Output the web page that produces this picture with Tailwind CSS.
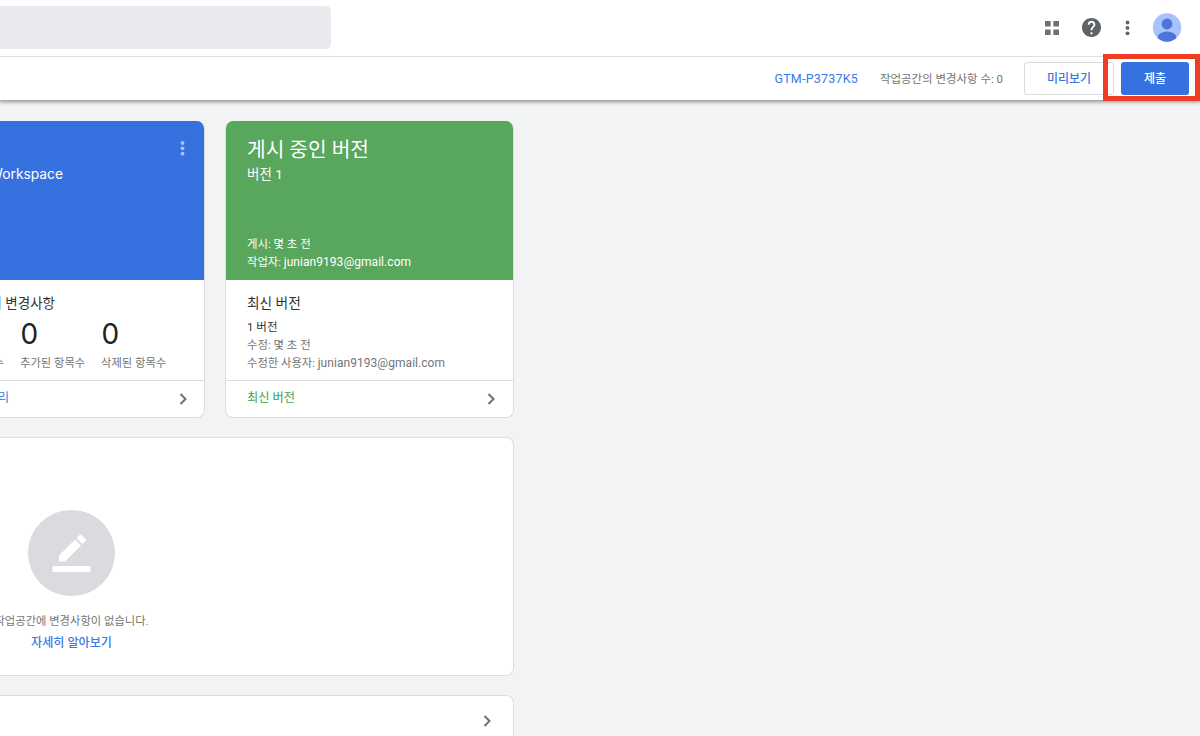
<!DOCTYPE html>
<html lang="ko">
<head>
<meta charset="utf-8">
<title>Tag Manager</title>
<script src="https://cdn.jsdelivr.net/npm/@tailwindcss/browser@4"></script>
</head>
<body class="w-[1200px] h-[736px] overflow-hidden bg-[#f1f3f5] font-['Roboto','Noto_Sans_CJK_KR',sans-serif] text-[11.3px] whitespace-nowrap text-[#757575]">
<header class="relative z-10 h-[100px] bg-white shadow-[0_1px_4px_1px_rgba(0,0,0,0.4)]">
  <div class="flex h-[57px] items-start justify-between border-b border-[#dfe0e2]">
    <div class="mt-[6px] h-[43px] w-[331px] rounded-r-[5px] bg-[#e8eaed]"></div>
    <div class="mr-[18px] flex h-[55px] items-center">
      <svg class="mt-px mr-[23px] size-[14px]" viewBox="0 0 15 15" fill="#707070"><path d="M0 0h6v6H0zM9 0h6v6H9zM0 9h6v6H0zM9 9h6v6H9z"/></svg>
      <svg class="mr-[17px] size-[19px]" viewBox="2 2 20 20" fill="#5f6368"><path d="M12 2C6.480 2 2 6.480 2 12s4.480 10 10 10 10-4.480 10-10S17.520 2 12 2zm1 17h-2v-2h2v2zm2.070-7.750-.9.920C13.450 12.900 13 13.500 13 15h-2v-.5c0-1.100.45-2.100 1.170-2.830l1.240-1.260c.37-.36.59-.86.59-1.410 0-1.100-.9-2-2-2s-2 .9-2 2H8c0-2.210 1.790-4 4-4s4 1.790 4 4c0 .88-.36 1.680-.93 2.250z"/></svg>
      <svg class="mr-[15px] h-[16px] w-[20px]" viewBox="0 0 20 16" fill="#5f6368"><circle cx="9.500" cy="2.500" r="1.900"/><circle cx="9.500" cy="7.900" r="1.900"/><circle cx="9.500" cy="13.300" r="1.900"/></svg>
      <svg class="size-[29px]" viewBox="0 0 29 29"><defs><clipPath id="av"><circle cx="14" cy="14.500" r="14.200"/></clipPath></defs><circle cx="14" cy="14.500" r="14.200" fill="#a6c3fb"/><g fill="#4d74d7" clip-path="url(#av)"><circle cx="14" cy="11" r="5.400"/><ellipse cx="14" cy="24" rx="9.300" ry="5.400"/></g></svg>
    </div>
  </div>
  <div class="flex h-[43px] items-center justify-end">
    <span class="mt-px mr-[21px] w-[84.500px] text-[12.500px] tracking-[0.2px] text-[#3b78e7]">GTM-P3737K5</span>
    <span class="mt-[3px] mr-[20px] w-[124px] text-[11.450px]">작업공간의 변경사항 수: 0</span>
    <div class="relative flex">
      <button class="mr-[7px] h-[33px] w-[90px] rounded-[3px] border border-[#dadce0] pt-px text-[12px] font-medium text-[#3b78e7]">미리보기</button>
      <button class="mr-[11px] h-[33px] w-[68px] rounded-[3px] bg-[#3671e0] pt-px text-[12px] font-medium text-white">제출</button>
      <div class="absolute -top-[8px] left-[79px] h-[47px] w-[97px] border-[5px] border-[#ef3d25]"></div>
    </div>
  </div>
</header>
<main class="flex w-[514px] flex-col gap-[19px] pt-[21px]">
  <div class="flex h-[297px] gap-[20px]">
    <section class="flex w-[205px] flex-col overflow-hidden rounded-r-[8px] border-r border-b border-[#dadce0] bg-white">
      <div class="flex h-[159px] justify-between bg-[#3671e0] text-white">
        <div class="mt-[44px] flex h-[18px] w-[63px] justify-end text-[13.800px] leading-[18px] font-['Inter']">Workspace</div>
        <svg class="mt-[20px] mr-[15px] size-[15px]" viewBox="0 0 15 15" fill="#a9c3f5"><circle cx="8.500" cy="2" r="1.900"/><circle cx="8.500" cy="7.300" r="1.900"/><circle cx="8.500" cy="12.700" r="1.900"/></svg>
      </div>
      <div class="h-[100px] pt-[13px]">
        <div class="flex h-[20px] w-[55px] justify-end text-[13.500px] leading-[20px] text-[#333]">작업공간의 변경사항</div>
        <div class="mt-[5px] flex h-[32px] gap-[61px] pl-[20.500px] font-['Inter'] text-[28px] leading-[32px] text-[#212121]"><span class="w-[20px]">0</span><span class="w-[20px]">0</span></div>
        <div class="mt-[5px] flex h-[18px] leading-[18px]"><span class="flex w-[4px] justify-end">수정된 항목수</span><span class="ml-[16px] w-[65px]">추가된 항목수</span><span class="ml-[16px]">삭제된 항목수</span></div>
      </div>
      <div class="flex h-[37px] justify-between border-t border-[#dadce0]">
        <div class="flex h-[34px] w-[9px] items-center justify-end text-[12.300px] text-[#3b78e7]">작업공간 관리</div>
        <svg class="mt-[12px] mr-[14px] size-[12px]" viewBox="0 0 12 12" fill="none" stroke="#707070" stroke-width="2"><path d="M2.500 1 7.500 6 2.500 11"/></svg>
      </div>
    </section>
    <section class="flex w-[289px] flex-col overflow-hidden rounded-[8px] border-x border-b border-[#dadce0] bg-white">
      <div class="h-[159px] bg-[#59a65d] pt-[14px] pl-[21px] text-white">
        <div class="h-[29px] text-[20.300px] leading-[30px]">게시 중인 버전</div>
        <div class="h-[20px] text-[13.500px] leading-[20px]">버전 1</div>
        <div class="mt-[51px] h-[18px] text-[11.400px] leading-[18px]">게시: 몇 초 전</div>
        <div class="leading-[18px]">작업자: <span class="text-[12px] tracking-[0.050px]">junian9193@gmail.com</span></div>
      </div>
      <div class="h-[100px] pt-[13px] pl-[21px]">
        <div class="h-[20px] text-[13.700px] leading-[20px] text-[#333]">최신 버전</div>
        <div class="mt-[5px] h-[18px] text-[11.500px] leading-[18px] text-[#333]">1 버전</div>
        <div class="h-[18px] text-[11.400px] leading-[18px]">수정: 몇 초 전</div>
        <div class="leading-[18px]">수정한 사용자: <span class="text-[12px] tracking-[0.050px]">junian9193@gmail.com</span></div>
      </div>
      <div class="flex h-[37px] justify-between border-t border-[#dadce0] pl-[21px]">
        <div class="h-[34px] text-[12.200px] leading-[34px] text-[#43a047]">최신 버전</div>
        <svg class="mt-[12px] mr-[15px] size-[12px]" viewBox="0 0 12 12" fill="none" stroke="#707070" stroke-width="2"><path d="M2.500 1 7.500 6 2.500 11"/></svg>
      </div>
    </section>
  </div>
  <section class="h-[239px] rounded-r-[8px] border border-l-0 border-[#dadce0] bg-white">
    <div class="-ml-[29px] flex w-[201px] flex-col items-center pt-[72px]">
      <div class="flex h-[86px] w-[87px] items-center justify-center rounded-full bg-[#dadbdf]">
        <svg class="h-[40px] w-[40px]" viewBox="0 0 40 40" fill="#fff"><path d="M.5 33h38v6H.5zM7 22.500v6h6L29 12.500l-6-6zM24.500 5l6 6 3-3c.7-.7.7-1.300 0-2l-4-4c-.7-.7-1.300-.7-2 0z"/></svg>
      </div>
      <div class="mt-[16px] h-[20px] leading-[20px]">작업공간에 변경사항이 없습니다.</div>
      <div class="mt-px h-[20px] text-[12.100px] leading-[20px] font-medium text-[#3b78e7]">자세히 알아보기</div>
    </div>
  </section>
  <section class="flex h-[60px] justify-end rounded-tr-[8px] border-t border-r border-[#dadce0] bg-white">
    <svg class="mt-[19px] mr-[20px] size-[12px]" viewBox="0 0 12 12" fill="none" stroke="#707070" stroke-width="2"><path d="M3.500 1 8.500 6 3.500 11"/></svg>
  </section>
</main>
</body>
</html>
